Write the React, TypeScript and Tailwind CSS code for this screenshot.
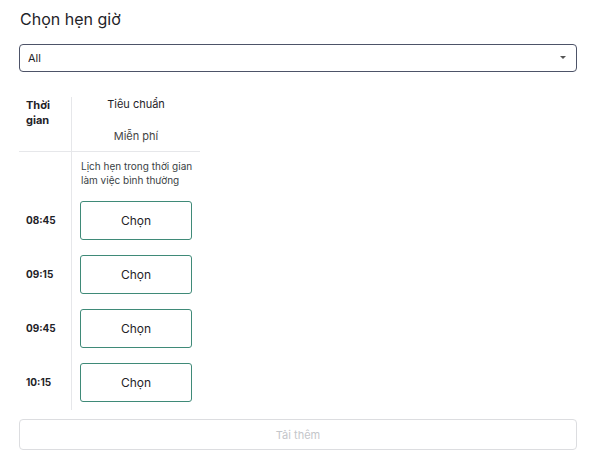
import React, { useState } from "react";

const slots = ["08:45", "09:15", "09:45", "10:15"];

const App: React.FC = () => {
  const [filter, setFilter] = useState("All");

  return (
    <div
      className="w-[600px] h-[466px] bg-white pl-[19px] pr-[23px] pt-[6px] text-[#1f2328]"
      style={{ fontFamily: "Inter, 'Noto Sans', sans-serif" }}
    >
      <h1 className="text-[16px] leading-[26px] pl-[1px]">Chọn hẹn giờ</h1>

      <div className="relative mt-[12px]">
        <select
          value={filter}
          onChange={(e) => setFilter(e.target.value)}
          className="w-full h-[28px] appearance-none rounded-[4px] border border-[#4d5368] bg-white pl-[8px] text-[11px] text-[#1f2328] outline-none"
        >
          <option>All</option>
        </select>
        <span className="pointer-events-none absolute right-[11px] top-[12px] h-0 w-0 border-x-[3px] border-t-[3px] border-x-transparent border-t-[#555]" />
      </div>

      <div className="mt-[25px] grid w-[181px] grid-cols-[52px_129px]">
        {/* header */}
        <div className="border-b border-[#e6e7ea] pl-[7px] pt-[1px] text-[11px] font-bold leading-[15px]">
          Thời
          <br />
          gian
        </div>
        <div className="flex h-[55px] flex-col items-center border-b border-l border-[#e6e7ea] text-[11px] leading-[14px]">
          <span>Tiêu chuẩn</span>
          <span className="mt-[18px] text-[#444]">Miễn phí</span>
        </div>

        <div />
        <div className="whitespace-nowrap border-l border-[#e6e7ea] pl-[9px] py-[7px] text-[10px] leading-[14px] text-[#3a3f45]">
          Lịch hẹn trong thời gian
          <br />
          làm việc bình thường
        </div>

        {slots.map((t) => (
          <React.Fragment key={t}>
            <div className="flex h-[54px] items-start pl-[7px] pt-[7px]">
              <span className="flex h-[39px] items-center text-[10px] font-bold">{t}</span>
            </div>
            <div className="h-[54px] border-l border-[#e6e7ea] pl-[8px] pt-[7px]">
              <button className="h-[39px] w-[112px] rounded-[3px] border border-[#3f8a78] bg-white text-[12px] text-[#1f2328]">
                Chọn
              </button>
            </div>
          </React.Fragment>
        ))}
      </div>

      <button className="mt-[9px] h-[31px] w-full rounded-[4px] border border-[#dcdde0] bg-white text-[11px] text-[#c4c6ca]">
        Tải thêm
      </button>
    </div>
  );
};

export default App;
